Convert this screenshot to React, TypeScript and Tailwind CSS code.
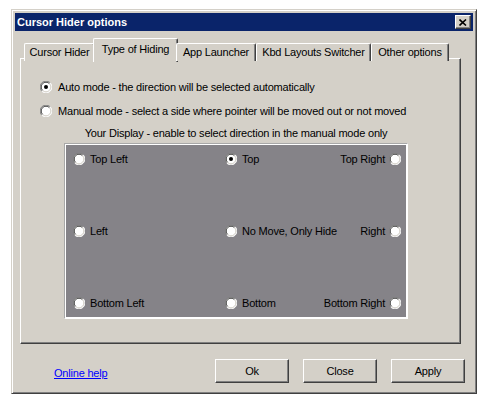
import React from 'react';

const font = { fontFamily: '"Liberation Sans", Arial, sans-serif' };

function Radio({ checked = false }: { checked?: boolean }) {
  return (
    <svg width="12" height="12" viewBox="0 0 12 12" className="shrink-0">
      <circle cx="6" cy="6" r="5.5" fill="#fff" />
      <path d="M10.2 1.8A5.5 5.5 0 0 0 1.8 10.2" fill="none" stroke="#808080" strokeWidth="1" />
      <path d="M9.4 2.6A4.5 4.5 0 0 0 2.6 9.4" fill="none" stroke="#404040" strokeWidth="1" />
      <path d="M1.8 10.2A5.5 5.5 0 0 0 10.2 1.8" fill="none" stroke="#ffffff" strokeWidth="1" />
      <path d="M2.6 9.4A4.5 4.5 0 0 0 9.4 2.6" fill="none" stroke="#d4d0c8" strokeWidth="1" />
      {checked && <circle cx="6" cy="6" r="2" fill="#000" />}
    </svg>
  );
}

const tabs = [
  { label: 'Cursor Hider', w: 'w-[71px]' },
  { label: 'Type of Hiding', w: 'w-[79px]', active: true },
  { label: 'App Launcher', w: 'w-[80px]' },
  { label: 'Kbd Layouts Switcher', w: 'w-[115px]' },
  { label: 'Other options', w: 'w-[78px]' },
];

function Btn({ children }: { children: React.ReactNode }) {
  return (
    <button className="w-[74px] h-[24px] bg-[#d4d0c8] border border-t-white border-l-white border-r-[#404040] border-b-[#404040] shadow-[inset_-1px_-1px_0_#808080] text-[11px] text-black leading-none">
      {children}
    </button>
  );
}

export default function App() {
  return (
    <div className="w-[495px] h-[412px] bg-white pt-[9px] pl-[11px] tracking-[-0.2px]" style={font}>
      <div className="w-[466px] h-[385px] bg-[#d4d0c8] border border-t-[#d4d0c8] border-l-[#d4d0c8] border-r-[#404040] border-b-[#404040] shadow-[inset_1px_1px_0_#fff,inset_-1px_-1px_0_#808080] p-[2px] flex flex-col">
        {/* title bar */}
        <div className="mx-[1px] mt-[1px] h-[18px] bg-[#0a246a] flex items-center justify-between pl-[2px] pr-[2px]">
          <span className="text-white font-bold text-[11px] leading-none tracking-normal">Cursor Hider options</span>
          <div className="w-[16px] h-[14px] bg-[#d4d0c8] border border-t-white border-l-white border-r-[#404040] border-b-[#404040] shadow-[inset_-1px_-1px_0_#808080] flex items-center justify-center">
            <svg width="8" height="7" viewBox="0 0 8 7">
              <path d="M0.5 0.5L7 6.5M7 0.5L0.5 6.5" stroke="#000" strokeWidth="1.6" />
            </svg>
          </div>
        </div>

        {/* tabs */}
        <div className="mt-[9px] ml-[8px] flex items-end h-[21px] relative z-10 pl-[2px]">
          {tabs.map((t) =>
            t.active ? (
              <div
                key={t.label}
                className={`${t.w} h-[21px] -mx-[2px] box-content px-[2px] -mb-[1px] bg-[#d4d0c8] border-t border-l border-t-white border-l-white border-r border-r-[#404040] shadow-[inset_-1px_0_0_#808080] rounded-tl-[2px] rounded-tr-[2px] flex items-start justify-center pt-[2px] text-[11px] text-black`}
              >
                {t.label}
              </div>
            ) : (
              <div
                key={t.label}
                className={`${t.w} h-[18px] bg-[#d4d0c8] border-t border-l border-t-white border-l-white border-r border-r-[#404040] shadow-[inset_-1px_0_0_#808080] rounded-tl-[2px] rounded-tr-[2px] flex items-center justify-center text-[11px] text-black`}
              >
                {t.label}
              </div>
            )
          )}
        </div>

        {/* panel */}
        <div className="ml-[6px] w-[441px] h-[286px] -mt-[3px] border border-t-white border-l-white border-r-[#404040] border-b-[#404040] shadow-[inset_-1px_-1px_0_#808080] flex flex-col pl-[19px] text-[11px] text-black">
          <div className="mt-[20px] h-[16px] flex items-center gap-[6px]">
            <Radio checked />
            <span>Auto mode - the direction will be selected automatically</span>
          </div>
          <div className="mt-[8px] h-[16px] flex items-center gap-[6px]">
            <Radio />
            <span>Manual mode - select a side where pointer will be moved out or not moved</span>
          </div>
          <div className="mt-[8px] w-[344px] ml-[24px] text-center leading-[13px]">
            Your Display - enable to select direction in the manual mode only
          </div>
          <div className="mt-[3px] ml-[24px] w-[344px] h-[176px] bg-[#858388] border border-t-[#a8a8a8] border-l-[#a8a8a8] border-r-white border-b-white shadow-[inset_1px_1px_0_#fff,inset_-1px_-1px_0_#fff] flex flex-col justify-between pt-[7px] pb-[7px] pl-[8px] pr-[6px]">
            {[
              ['Top Left', 'Top', 'Top Right', 'top'],
              ['Left', 'No Move, Only Hide', 'Right', ''],
              ['Bottom Left', 'Bottom', 'Bottom Right', ''],
            ].map((r) => (
              <div key={r[0]} className="h-[16px] grid grid-cols-[152px_1fr_auto] items-center">
                <div className="flex items-center gap-[5px]">
                  <Radio />
                  <span>{r[0]}</span>
                </div>
                <div className="flex items-center gap-[5px]">
                  <Radio checked={r[3] === 'top'} />
                  <span>{r[1]}</span>
                </div>
                <div className="flex items-center gap-[4px]">
                  <span>{r[2]}</span>
                  <Radio />
                </div>
              </div>
            ))}
          </div>
        </div>

        {/* bottom */}
        <div className="mt-[15px] flex items-center pl-[40px] pr-[9px]">
          <a className="text-[11px] text-[#0000ff] underline mt-[4px]">Online help</a>
          <div className="ml-auto flex gap-[14px]">
            <Btn>Ok</Btn>
            <Btn>Close</Btn>
            <Btn>Apply</Btn>
          </div>
        </div>
      </div>
    </div>
  );
}
